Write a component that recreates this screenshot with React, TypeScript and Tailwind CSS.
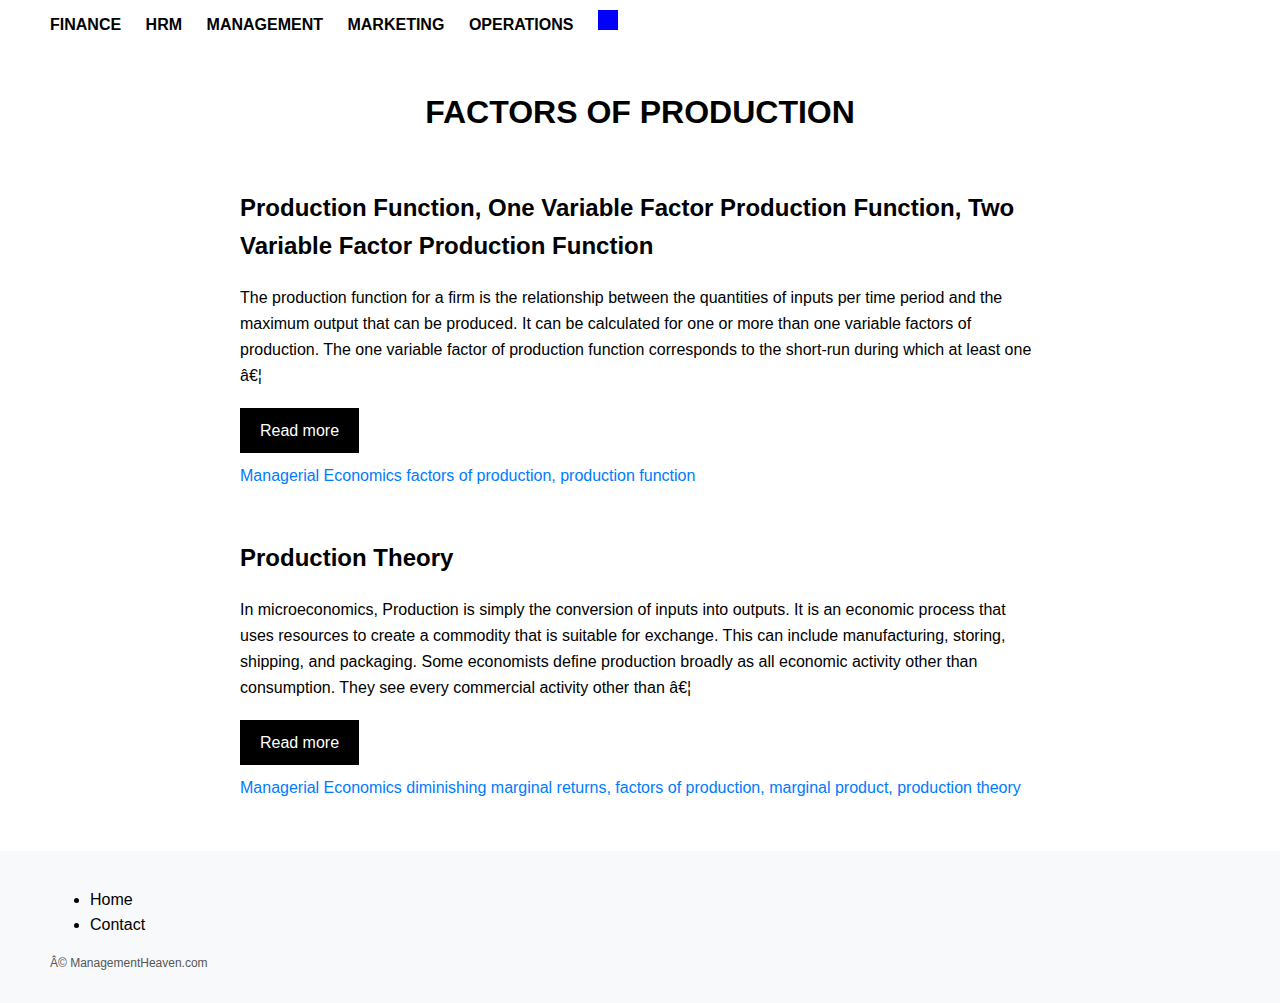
const navItems = ['FINANCE', 'HRM', 'MANAGEMENT', 'MARKETING', 'OPERATIONS'];

const posts = [
  {
    title: 'Production Function, One Variable Factor Production Function, Two Variable Factor Production Function',
    excerpt:
      'The production function for a firm is the relationship between the quantities of inputs per time period and the maximum output that can be produced. It can be calculated for one or more than one variable factors of production. The one variable factor of production function corresponds to the short-run during which at least one â€¦',
    category: 'Managerial Economics',
    tags: 'factors of production, production function',
  },
  {
    title: 'Production Theory',
    excerpt:
      'In microeconomics, Production is simply the conversion of inputs into outputs. It is an economic process that uses resources to create a commodity that is suitable for exchange. This can include manufacturing, storing, shipping, and packaging. Some economists define production broadly as all economic activity other than consumption. They see every commercial activity other than â€¦',
    category: 'Managerial Economics',
    tags: 'diminishing marginal returns, factors of production, marginal product, production theory',
  },
];

export default function App() {
  return (
    <div className="min-h-[1003px] bg-white text-black font-['Liberation_Sans',Arial,sans-serif]">
      {/* Top nav */}
      <nav className="flex items-start gap-[24.5px] pl-[50px] pt-[10px] h-[48px]">
        {navItems.map((item) => (
          <a key={item} href="#" className="text-base font-bold leading-[28px] pt-px">
            {item}
          </a>
        ))}
        <span className="block w-5 h-5 bg-[#0000ff]" />
      </nav>

      <main className="pb-[50px]">
        <h1 className="mt-[45px] text-center text-[32px] font-bold leading-[38px]">FACTORS OF PRODUCTION</h1>

        <div className="w-[800px] mx-auto">
          {posts.map((post, i) => (
            <article key={post.title} className={i === 0 ? 'mt-[58px]' : 'mt-[50px]'}>
              <h2 className="text-2xl font-bold leading-[38px]">{post.title}</h2>
              <p className="mt-[20px] text-base leading-[26px]">{post.excerpt}</p>
              <a href="#" className="mt-[19px] flex items-center justify-center w-[119px] h-[45px] bg-black text-white text-base">
                Read more
              </a>
              <p className="mt-[10px] text-base leading-[26px] text-[#007bff]">
                {post.category} {post.tags}
              </p>
            </article>
          ))}
        </div>
      </main>

      {/* Footer */}
      <footer className="bg-[#f8f9fa] pt-[36px] pb-[33px] px-[50px]">
        <ul className="list-disc pl-10 text-base leading-[25px]">
          <li>Home</li>
          <li>Contact</li>
        </ul>
        <p className="mt-[18px] text-xs leading-4 text-[#555]">Â© ManagementHeaven.com</p>
      </footer>
    </div>
  );
}
